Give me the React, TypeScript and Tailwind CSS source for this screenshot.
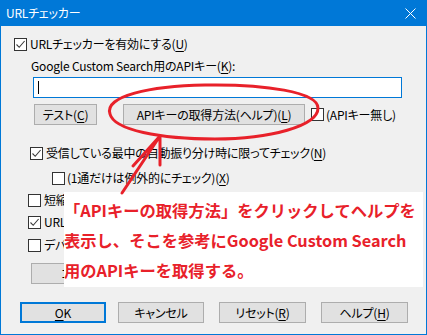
import React from "react";

function Check({ checked }: { checked?: boolean }) {
  return (
    <span className="w-[13px] h-[13px] border border-[#333333] bg-white flex items-center justify-center shrink-0">
      {checked && (
        <svg width="11" height="11" viewBox="0 0 11 11">
          <path d="M1.5 5.5 L4.2 8.3 L9.6 2" stroke="#3c3c3c" strokeWidth="1.1" fill="none" />
        </svg>
      )}
    </span>
  );
}

function U({ children }: { children: React.ReactNode }) {
  return <span className="underline underline-offset-[2px] decoration-1">{children}</span>;
}

function Btn({ w, children, focused }: { w: string; children: React.ReactNode; focused?: boolean }) {
  return (
    <div
      className={`${w} h-[21px] shrink-0 flex items-center justify-center bg-[#e1e1e1] ${
        focused ? "border-2 border-[#0078d7]" : "border border-[#adadad]"
      }`}
    >
      {children}
    </div>
  );
}

export default function App() {
  return (
    <div className="relative w-[427px] h-[335px] bg-[#0078d7] flex flex-col px-px pb-px font-['Noto_Sans_CJK_JP',sans-serif] [font-feature-settings:'palt'] text-[12px] tracking-[-0.2px] leading-none text-black overflow-hidden">
      {/* title bar */}
      <div className="h-[26px] shrink-0 flex items-center justify-between pl-[5px] pr-[10px] text-white text-[12px]">
        <span>URLチェッカー</span>
        <svg width="11" height="11" viewBox="0 0 11 11">
          <path d="M0.5 0.5 L10.5 10.5 M10.5 0.5 L0.5 10.5" stroke="white" strokeWidth="1" />
        </svg>
      </div>
      {/* body */}
      <div className="flex-1 bg-[#f0f0f0] flex flex-col">
        <div className="mt-[10px] h-[16px] ml-[13px] flex items-center gap-[3px]">
          <Check checked />
          <span>
            URLチェッカーを有効にする(<U>U</U>)
          </span>
        </div>
        <div className="mt-[6px] h-[16px] ml-[30px] flex items-center">
          <span>
            Google Custom Search用のAPIキー(<U>K</U>):
          </span>
        </div>
        <div className="mt-[3px] ml-[32px] w-[369px] h-[21px] border border-[#0078d7] bg-white flex items-center">
          <span className="ml-[4px] w-px h-[13px] bg-black" />
        </div>
        <div className="mt-[6px] ml-[33px] h-[21px] flex items-center">
          <Btn w="w-[63px]">
            <span>
              テスト(<U>C</U>)
            </span>
          </Btn>
          <div className="w-[26px]" />
          <Btn w="w-[182px]">
            <span>
              APIキーの取得方法(ヘルプ)(<U>L</U>)
            </span>
          </Btn>
          <div className="w-[6px]" />
          <div className="flex items-center gap-[2px]">
            <Check />
            <span>(APIキー無し)</span>
          </div>
        </div>
        <div className="mt-[20px] h-[16px] ml-[29px] flex items-center gap-[3px]">
          <Check checked />
          <span>
            受信している最中の自動振り分け時に限ってチェック(<U>N</U>)
          </span>
        </div>
        <div className="mt-[9px] h-[16px] ml-[51px] flex items-center gap-[2px]">
          <Check />
          <span>
            (1通だけは例外的にチェック)(<U>X</U>)
          </span>
        </div>
        <div className="mt-[6px] h-[16px] ml-[27px] flex items-center gap-[3px]">
          <Check />
          <span className="w-[22px] overflow-hidden whitespace-nowrap">短縮URL</span>
        </div>
        <div className="mt-[6px] h-[16px] ml-[27px] flex items-center gap-[3px]">
          <Check checked />
          <span className="w-[22px] overflow-hidden whitespace-nowrap">URLの</span>
        </div>
        <div className="mt-[7px] h-[16px] ml-[27px] flex items-center gap-[3px]">
          <Check />
          <span className="w-[22px] overflow-hidden whitespace-nowrap">デバッグ</span>
        </div>
        <div className="mt-[10px] ml-[30px] w-[33px] overflow-hidden flex">
          <div className="w-[128px] h-[21px] shrink-0 flex items-center bg-[#e1e1e1] border border-[#adadad] pl-[29px]">
            <span>コ</span>
          </div>
        </div>
        <div className="mt-[18px] h-[21px] flex items-center">
          <div className="ml-[19px]" />
          <Btn w="w-[86px]" focused>
            <span>
              <U>O</U>K
            </span>
          </Btn>
          <div className="w-[12px]" />
          <Btn w="w-[86px]">
            <span>キャンセル</span>
          </Btn>
          <div className="w-[15px]" />
          <Btn w="w-[87px]">
            <span>
              リセット(<U>R</U>)
            </span>
          </Btn>
          <div className="w-[15px]" />
          <Btn w="w-[87px]">
            <span>
              ヘルプ(<U>H</U>)
            </span>
          </Btn>
        </div>
      </div>

      {/* annotation box */}
      <div className="absolute left-[64px] top-[192px] w-[359px] h-[95px] bg-white pt-[3px] [font-feature-settings:normal] tracking-normal text-[16.3px] leading-[30px] font-bold text-[#e8212a] whitespace-nowrap">
        <div>「APIキーの取得方法」をクリックしてヘルプを</div>
        <div>表示し、そこを参考にGoogle Custom Search</div>
        <div>用のAPIキーを取得する。</div>
      </div>

      {/* red ellipse + arrow */}
      <svg className="absolute left-0 top-0 pointer-events-none" width="427" height="335" viewBox="0 0 427 335">
        <path
          d="M110 114 C 104 96, 150 86, 205 85 C 265 84, 318 92, 318 108 C 318 126, 270 139, 215 139 C 160 139, 114 130, 110 114 Z"
          fill="none"
          stroke="#e8212a"
          strokeWidth="3"
        />
        <path
          d="M122 193 L160 136 M160 136 L133 166 M160 136 L160 165"
          fill="none"
          stroke="#e8212a"
          strokeWidth="3"
          strokeLinecap="round"
        />
      </svg>
    </div>
  );
}
